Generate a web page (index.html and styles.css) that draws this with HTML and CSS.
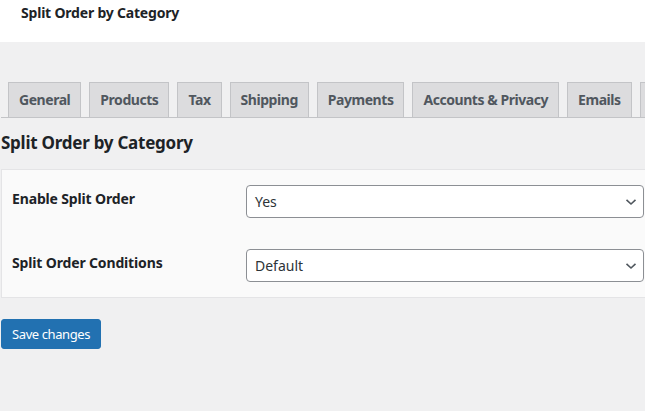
FILE: index.html
```html
<!DOCTYPE html>
<html lang="en">
<head>
  <meta charset="UTF-8">
  <title>Split Order by Category</title>
  <link rel="stylesheet" href="styles.css">
</head>
<body>
  <header class="topbar">
    <h1>Split Order by Category</h1>
  </header>
  <div class="wrap">
    <nav class="tabs">
      <a href="#" class="tab">General</a>
      <a href="#" class="tab">Products</a>
      <a href="#" class="tab">Tax</a>
      <a href="#" class="tab">Shipping</a>
      <a href="#" class="tab">Payments</a>
      <a href="#" class="tab">Accounts &amp; Privacy</a>
      <a href="#" class="tab">Emails</a>
      <a href="#" class="tab tab-more" aria-label="More"></a>
    </nav>

    <h2 class="section-title">Split Order by Category</h2>

    <div class="panel">
      <div class="row">
        <label class="row-label">Enable Split Order</label>
        <div class="select">
          <span>Yes</span>
          <svg width="12" height="8" viewBox="0 0 12 8"><path d="M1.5 1.8 L6 6 L10.5 1.8" fill="none" stroke="#50575e" stroke-width="1.6"/></svg>
        </div>
      </div>
      <div class="row">
        <label class="row-label">Split Order Conditions</label>
        <div class="select">
          <span>Default</span>
          <svg width="12" height="8" viewBox="0 0 12 8"><path d="M1.5 1.8 L6 6 L10.5 1.8" fill="none" stroke="#50575e" stroke-width="1.6"/></svg>
        </div>
      </div>
    </div>

    <button class="save-button">Save changes</button>
  </div>
</body>
</html>
```

FILE: styles.css
```css
body {
  margin: 0;
  padding: 0;
  background-color: #f0f0f1;
  font-family: "Noto Sans", "Open Sans", sans-serif;
  color: #1d2327;
  overflow: hidden;
}
.topbar {
  background-color: #fff;
  height: 42px;
  padding-left: 21px;
  box-sizing: border-box;
}
.topbar h1 {
  margin: 0;
  padding-top: 3px;
  font-size: 14px;
  line-height: 20px;
  font-weight: 700;
  letter-spacing: -0.2px;
}
.wrap {
  padding-left: 1px;
}
.tabs {
  display: flex;
  gap: 8px;
  margin-top: 40px;
  padding-left: 7px;
  border-bottom: 1px solid #c3c4c7;
  white-space: nowrap;
}
.tab {
  flex-shrink: 0;
  padding: 5px 10px;
  line-height: 24px;
  font-size: 14px;
  font-weight: 700;
  letter-spacing: -0.45px;
  color: #50575e;
  text-decoration: none;
  background-color: #dcdcde;
  border: 1px solid #c3c4c7;
  border-bottom: none;
}
.tab-more {
  width: 60px;
}
.section-title {
  margin: 13px 0 14px;
  font-size: 17px;
  line-height: 24px;
  font-weight: 700;
  letter-spacing: -0.25px;
}
.panel {
  background-color: #fafafa;
  border: 1px solid #e4e4e6;
  border-right: none;
  padding: 15px 0 15px 10px;
  display: flex;
  flex-direction: column;
  gap: 31px;
}
.row {
  display: flex;
  align-items: flex-start;
}
.row-label {
  width: 234px;
  padding-top: 4px;
  font-size: 14px;
  font-weight: 700;
  line-height: 20px;
  letter-spacing: -0.15px;
}
.select {
  display: flex;
  align-items: center;
  justify-content: space-between;
  width: 398px;
  height: 33px;
  box-sizing: border-box;
  padding: 0 6px 0 8px;
  background-color: #fff;
  border: 1px solid #8c8f94;
  border-radius: 4px;
  font-size: 14px;
  color: #2c3338;
}
.save-button {
  margin-top: 21px;
  height: 30px;
  padding: 0 10px;
  font-family: inherit;
  font-size: 13px;
  letter-spacing: -0.4px;
  color: #fff;
  background-color: #2271b1;
  border: 1px solid #2271b1;
  border-radius: 3px;
  cursor: pointer;
}
```
